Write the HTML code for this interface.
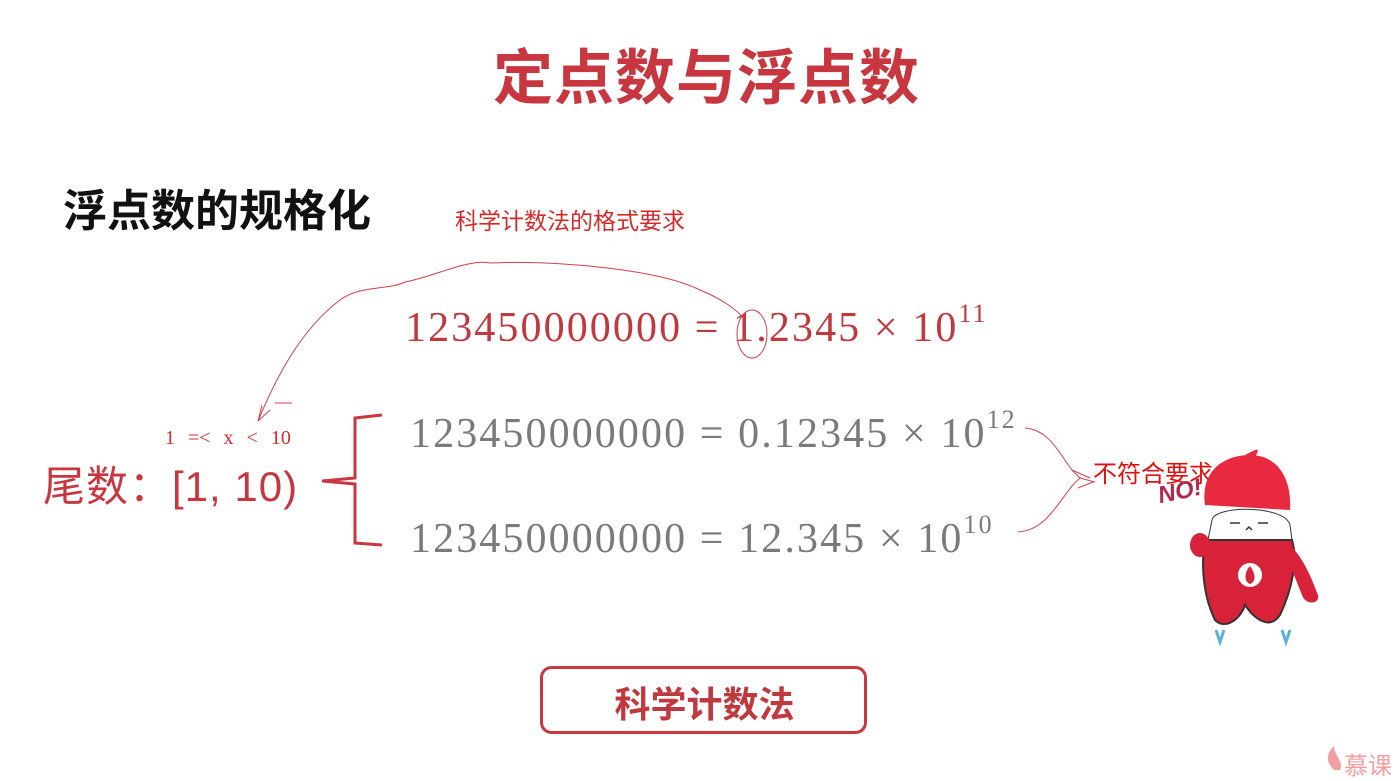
<!DOCTYPE html>
<html><head><meta charset="utf-8"><style>
body{margin:0;width:1400px;height:774px;background:#fff;position:relative;overflow:hidden;font-family:"Liberation Sans","Noto Sans CJK SC",sans-serif}
.a{position:absolute;white-space:nowrap}
.m{font-family:"Liberation Serif",serif;font-size:42px;letter-spacing:2.1px}
sup{font-size:26px;position:relative;top:-4px}
</style></head><body>
<div class="a" style="left:493px;top:30px;font-size:60px;font-weight:bold;color:#c8373f;letter-spacing:1px">定点数与浮点数</div>
<div class="a" style="left:63px;top:175px;font-size:44px;font-weight:bold;color:#111">浮点数的规格化</div>
<div class="a" style="left:455px;top:202px;font-size:23px;color:#d42a2a">科学计数法的格式要求</div>
<div class="a m" style="left:405px;top:303px;color:#c0393f">123450000000 = 1.2345 × 10<sup>11</sup></div>
<div class="a m" style="left:410px;top:409px;color:#7a7a7a">123450000000 = 0.12345 × 10<sup>12</sup></div>
<div class="a m" style="left:410px;top:514px;color:#7a7a7a">123450000000 = 12.345 × 10<sup>10</sup></div>
<div class="a" style="left:165px;top:427px;font-family:'Liberation Serif',serif;font-size:20px;color:#d42a2a;word-spacing:8px">1 =&lt; x &lt; 10</div>
<div class="a" style="left:43px;top:453px;font-size:42px;color:#c8373f;letter-spacing:1px">尾数：[1, 10)</div>
<div class="a" style="left:1093px;top:454px;font-size:24px;color:#e01010">不符合要求</div>
<div class="a" style="left:1158px;top:478px;font-size:24px;font-style:italic;font-weight:bold;color:#b0284a;transform:rotate(-12deg)">NO!</div>
<svg class="a" style="left:0;top:0" width="1400" height="774">
<g fill="none" stroke="#d0404a" stroke-width="1">
<path d="M258 421 C275 380 300 330 340 300 C360 285 390 290 405 282 C430 278 470 258 490 263 C560 260 660 270 700 290 C720 298 738 310 745 320"/>
<path d="M258 421 L262 405 M258 421 L270 410 M275 403 L292 403"/>
<ellipse cx="752" cy="334" rx="15" ry="24"/>
<path d="M1025 428 C1050 430 1060 455 1072 470 L1080 478 C1060 495 1050 530 1018 532"/>
<path d="M1072 470 L1090 478 M1080 478 L1095 482 M1078 488 L1093 482"/>
</g>
<path d="M382 415 L355 418 L355 478 L322 481 L355 484 L355 543 L382 545" fill="none" stroke="#c8373f" stroke-width="3"/>
<rect x="541.5" y="667.5" width="324" height="65" rx="10" fill="none" stroke="#c8373f" stroke-width="3"/>
<g>
<path d="M1205 505 C1200 470 1225 455 1250 455 C1275 455 1292 475 1290 510 Z" fill="#e8293f"/>
<path d="M1245 455 C1255 450 1262 445 1255 457 Z" fill="#e8293f"/>
<path d="M1212 520 C1215 505 1285 505 1290 525 L1292 540 L1208 540 Z" fill="#fff" stroke="#333" stroke-width="1"/>
<path d="M1205 540 C1200 570 1205 600 1215 620 C1225 630 1240 620 1245 605 C1255 620 1270 630 1280 615 C1292 590 1298 560 1292 540 Z" fill="#d8223a" stroke="#333" stroke-width="2"/>
<path d="M1290 545 C1305 560 1312 580 1318 595 C1320 605 1305 605 1302 595 L1292 570 Z" fill="#d8223a"/>
<ellipse cx="1200" cy="545" rx="10" ry="12" fill="#d8223a"/>
<circle cx="1250" cy="575" r="12" fill="#fff"/>
<path d="M1250 566 C1244 572 1244 582 1250 584 C1256 582 1256 574 1250 566Z" fill="#d8223a"/>
<path d="M1230 523 h10 M1258 523 h10 M1246 530 l3 -3 l3 3" stroke="#333" stroke-width="1.5" fill="none"/>
<path d="M1216 630 l4 12 l4 -12 M1282 630 l4 12 l4 -12" stroke="#5ab0d8" stroke-width="3" fill="none"/>
<path d="M1334 770 C1324 760 1328 752 1334 746 C1334 756 1344 760 1340 770Z" fill="#f0a0a0"/>
</g>
</svg>
<div class="a" style="left:541px;top:676px;width:327px;text-align:center;font-size:36px;font-weight:bold;color:#c0393f">科学计数法</div>
<div class="a" style="left:1344px;top:746px;font-size:24px;color:#f0a0a0">慕课</div>
</body></html>
